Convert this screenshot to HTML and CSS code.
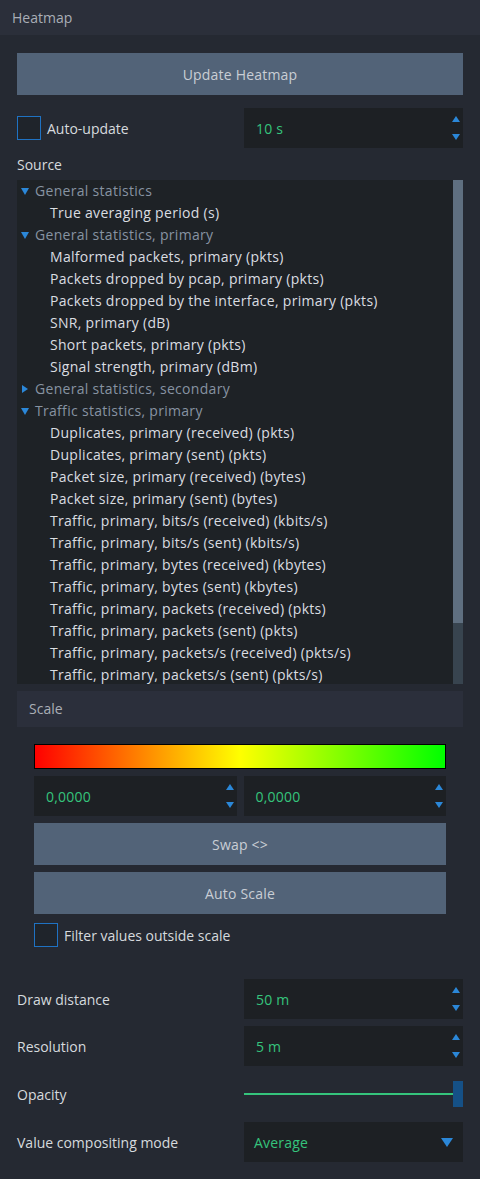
FILE: index.html
```html
<!DOCTYPE html>
<html lang="en">
<head>
    <meta charset="UTF-8">
    <meta name="viewport" content="width=device-width, initial-scale=1.0">
    <title>Heatmap</title>
    <link rel="stylesheet" href="styles.css">
</head>
<body>
    <div class="panel-header">Heatmap</div>

    <div class="panel">
        <button class="btn btn-wide">Update Heatmap</button>

        <div class="row row-auto">
            <label class="check">
                <span class="check-box"></span>
                <span>Auto-update</span>
            </label>
            <div class="spin">
                <span class="spin-value">10 s</span>
                <span class="spin-arrows"><i class="up"></i><i class="down"></i></span>
            </div>
        </div>

        <div class="section-label">Source</div>

        <div class="tree">
            <div class="tree-list">
                <div class="tree-cat"><i class="open"></i>General statistics</div>
                <div class="tree-item">True averaging period (s)</div>
                <div class="tree-cat"><i class="open"></i>General statistics, primary</div>
                <div class="tree-item">Malformed packets, primary (pkts)</div>
                <div class="tree-item">Packets dropped by pcap, primary (pkts)</div>
                <div class="tree-item">Packets dropped by the interface, primary (pkts)</div>
                <div class="tree-item">SNR, primary (dB)</div>
                <div class="tree-item">Short packets, primary (pkts)</div>
                <div class="tree-item">Signal strength, primary (dBm)</div>
                <div class="tree-cat"><i class="closed"></i>General statistics, secondary</div>
                <div class="tree-cat"><i class="open"></i>Traffic statistics, primary</div>
                <div class="tree-item">Duplicates, primary (received) (pkts)</div>
                <div class="tree-item">Duplicates, primary (sent) (pkts)</div>
                <div class="tree-item">Packet size, primary (received) (bytes)</div>
                <div class="tree-item">Packet size, primary (sent) (bytes)</div>
                <div class="tree-item">Traffic, primary, bits/s (received) (kbits/s)</div>
                <div class="tree-item">Traffic, primary, bits/s (sent) (kbits/s)</div>
                <div class="tree-item">Traffic, primary, bytes (received) (kbytes)</div>
                <div class="tree-item">Traffic, primary, bytes (sent) (kbytes)</div>
                <div class="tree-item">Traffic, primary, packets (received) (pkts)</div>
                <div class="tree-item">Traffic, primary, packets (sent) (pkts)</div>
                <div class="tree-item">Traffic, primary, packets/s (received) (pkts/s)</div>
                <div class="tree-item">Traffic, primary, packets/s (sent) (pkts/s)</div>
            </div>
            <div class="scrollbar"><div class="scroll-thumb"></div></div>
        </div>

        <div class="group-header">Scale</div>

        <div class="scale">
            <div class="gradient"></div>
            <div class="scale-spins">
                <div class="spin">
                    <span class="spin-value">0,0000</span>
                    <span class="spin-arrows"><i class="up"></i><i class="down"></i></span>
                </div>
                <div class="spin">
                    <span class="spin-value">0,0000</span>
                    <span class="spin-arrows"><i class="up"></i><i class="down"></i></span>
                </div>
            </div>
            <button class="btn">Swap &lt;&gt;</button>
            <button class="btn">Auto Scale</button>
            <label class="check">
                <span class="check-box"></span>
                <span>Filter values outside scale</span>
            </label>
        </div>

        <div class="settings">
            <div class="row">
                <span class="row-label">Draw distance</span>
                <div class="spin">
                    <span class="spin-value">50 m</span>
                    <span class="spin-arrows"><i class="up"></i><i class="down"></i></span>
                </div>
            </div>
            <div class="row">
                <span class="row-label">Resolution</span>
                <div class="spin">
                    <span class="spin-value">5 m</span>
                    <span class="spin-arrows"><i class="up"></i><i class="down"></i></span>
                </div>
            </div>
            <div class="row row-slider">
                <span class="row-label">Opacity</span>
                <div class="slider">
                    <div class="slider-track"></div>
                    <div class="slider-handle"></div>
                </div>
            </div>
            <div class="row">
                <span class="row-label">Value compositing mode</span>
                <div class="combo">
                    <span class="spin-value">Average</span>
                    <i class="combo-arrow"></i>
                </div>
            </div>
        </div>
    </div>
</body>
</html>
```

FILE: styles.css
```css
* {
    margin: 0;
    padding: 0;
    box-sizing: border-box;
}

body {
    font-family: "Open Sans", "Noto Sans", sans-serif;
    font-size: 14px;
    background: #252932;
    color: #d6dade;
    width: 480px;
    height: 1179px;
    overflow: hidden;
}

.panel-header {
    height: 35px;
    line-height: 35px;
    padding-left: 12px;
    background: #2b2f3a;
    color: #a9aeb6;
}

.panel {
    padding: 18px 17px 0 17px;
    display: flex;
    flex-direction: column;
}

.btn {
    display: block;
    width: 100%;
    height: 42px;
    border: none;
    background: #526378;
    color: #c9ced5;
    font-family: inherit;
    font-size: 14px;
    letter-spacing: 0.2px;
}

.row {
    display: flex;
    align-items: center;
    justify-content: space-between;
}

.row-auto {
    margin-top: 13px;
}

.check {
    display: flex;
    align-items: center;
    gap: 6px;
}

.check-box {
    width: 24px;
    height: 24px;
    border: 1px solid #1f72c3;
    background: #1f242b;
}

.spin,
.combo {
    width: 219px;
    height: 40px;
    background: #1d2024;
    display: flex;
    align-items: center;
    justify-content: space-between;
    padding-left: 12px;
}

.spin-value {
    color: #35c47c;
    font-size: 14px;
    letter-spacing: 0.2px;
}

.spin-arrows {
    display: flex;
    flex-direction: column;
    justify-content: space-between;
    height: 24px;
    margin-right: 3px;
}

.spin-arrows i {
    width: 0;
    height: 0;
    border-left: 4px solid transparent;
    border-right: 4px solid transparent;
}

.spin-arrows .up {
    border-bottom: 6px solid #2b87d8;
}

.spin-arrows .down {
    border-top: 6px solid #2b87d8;
}

.section-label {
    margin-top: 8px;
    height: 24px;
    line-height: 17px;
}

.tree {
    display: flex;
    height: 504px;
    overflow: hidden;
    letter-spacing: 0.3px;
}

.tree-list {
    flex: 1;
    background: #1e2226;
    overflow: hidden;
}

.tree-cat,
.tree-item {
    height: 22px;
    line-height: 22px;
    white-space: nowrap;
}

.tree-cat {
    display: flex;
    align-items: center;
    padding-left: 4px;
    color: #8793a2;
}

.tree-cat i {
    width: 0;
    height: 0;
    margin-right: 6px;
}

.tree-cat .open {
    border-left: 4px solid transparent;
    border-right: 4px solid transparent;
    border-top: 7px solid #2b87d8;
}

.tree-cat .closed {
    border-top: 4px solid transparent;
    border-bottom: 4px solid transparent;
    border-left: 6px solid #2b87d8;
    margin-left: 1px;
    margin-right: 7px;
}

.tree-item {
    padding-left: 33px;
    color: #dadde1;
}

.scrollbar {
    width: 10px;
    background: #38444f;
}

.scroll-thumb {
    height: 443px;
    background: #5f6f80;
}

.group-header {
    margin-top: 7px;
    height: 36px;
    line-height: 36px;
    padding-left: 12px;
    background: #2b2f3b;
    color: #a9aeb6;
}

.scale {
    padding: 17px 17px 0 17px;
    display: flex;
    flex-direction: column;
    gap: 7px;
}

.gradient {
    height: 25px;
    border: 1px solid #000;
    background: linear-gradient(to right, #ff0000 0%, #ff8000 25%, #ffff00 50%, #80ff00 75%, #00ff00 100%);
}

.scale-spins {
    display: flex;
    gap: 7px;
}

.scale-spins .spin {
    flex: 1;
    width: auto;
}

.scale .check {
    margin-top: 2px;
}

.settings {
    margin-top: 32px;
    display: flex;
    flex-direction: column;
    gap: 7px;
}

.row-slider {
    height: 42px;
}

.slider {
    width: 219px;
    height: 26px;
    display: flex;
    align-items: center;
}

.slider-track {
    flex: 1;
    height: 2px;
    background: #35c47c;
}

.slider-handle {
    width: 10px;
    height: 26px;
    background: #155086;
}

.combo {
    padding-left: 10px;
    padding-right: 10px;
}

.combo-arrow {
    width: 0;
    height: 0;
    border-left: 6px solid transparent;
    border-right: 6px solid transparent;
    border-top: 9px solid #2b87d8;
}
```
